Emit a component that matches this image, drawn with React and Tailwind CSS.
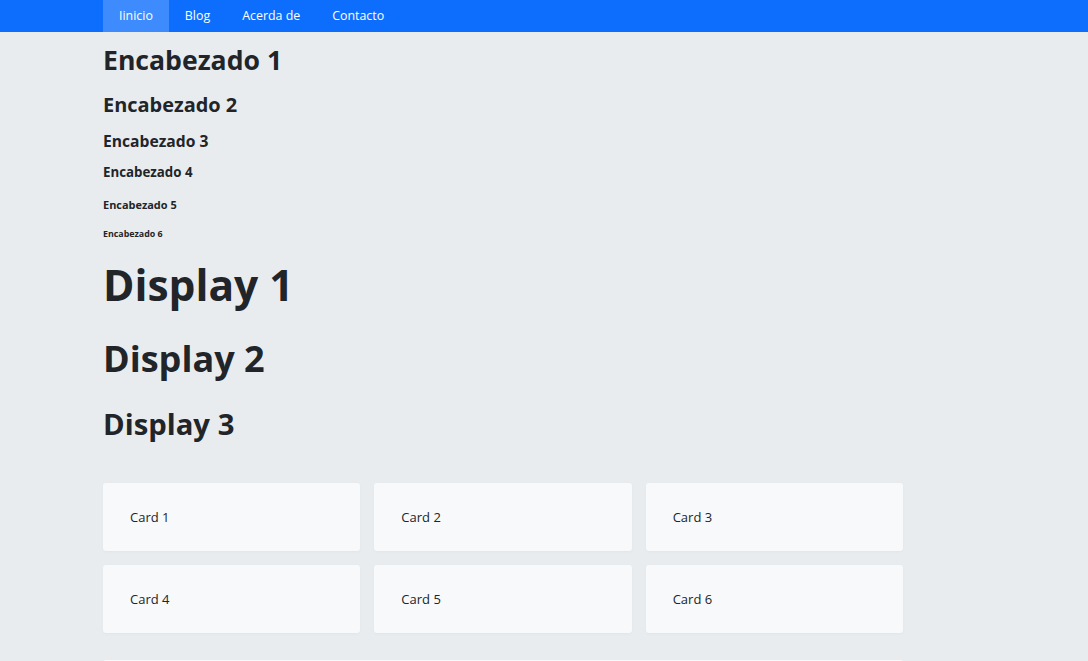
import React from 'react';

const links = ['Iinicio', 'Blog', 'Acerda de', 'Contacto'];
const cards = ['Card 1', 'Card 2', 'Card 3', 'Card 4', 'Card 5', 'Card 6'];

function Navbar() {
  return (
    <nav className="h-8 bg-[#0d6efd] pl-[103px] flex">
      {links.map((label, i) => (
        <a
          key={label}
          href="#"
          className={`px-4 flex items-center text-[12.4px] text-white ${i === 0 ? 'bg-[#3d8bfd]' : ''}`}
        >
          {label}
        </a>
      ))}
    </nav>
  );
}

export default function App() {
  return (
    <div className="h-screen overflow-hidden bg-[#e9ecef] text-[#212529] font-['Open_Sans',sans-serif]">
      <Navbar />
      <main className="ml-[103px] w-[800px] flex flex-col items-start">
        <h1 className="mt-[12.7px] text-[26.6px] leading-[1.2] font-bold">Encabezado 1</h1>
        <h2 className="mt-[16px] text-[19.95px] leading-[1.2] font-bold">Encabezado 2</h2>
        <h3 className="mt-[15.3px] text-[15.65px] leading-[1.2] font-bold">Encabezado 3</h3>
        <h4 className="mt-[14.4px] text-[13.3px] leading-[1.2] font-bold">Encabezado 4</h4>
        <h5 className="mt-[17px] text-[10.95px] leading-[1.2] font-bold">Encabezado 5</h5>
        <h6 className="mt-[18px] text-[8.85px] leading-[1.2] font-bold">Encabezado 6</h6>

        <p className="mt-[19.5px] text-[42.5px] leading-[1.2] font-bold">Display 1</p>
        <p className="mt-[27px] text-[36.05px] leading-[1.2] font-bold">Display 2</p>
        <p className="mt-[27px] text-[29.3px] leading-[1.2] font-bold">Display 3</p>

        <div className="mt-[40.5px] w-full grid grid-cols-3 gap-[14px]">
          {cards.map(c => (
            <div key={c} className="h-[68px] rounded-[3px] bg-[#f8f9fa] shadow-[0_1px_3px_rgba(0,0,0,0.03)] flex items-center px-[27px] pt-[2px] text-[13px]">
              {c}
            </div>
          ))}
        </div>

        <div className="mt-[27px] w-full h-[120px] rounded-[3px] bg-[#f8f9fa]" />
      </main>
    </div>
  );
}
